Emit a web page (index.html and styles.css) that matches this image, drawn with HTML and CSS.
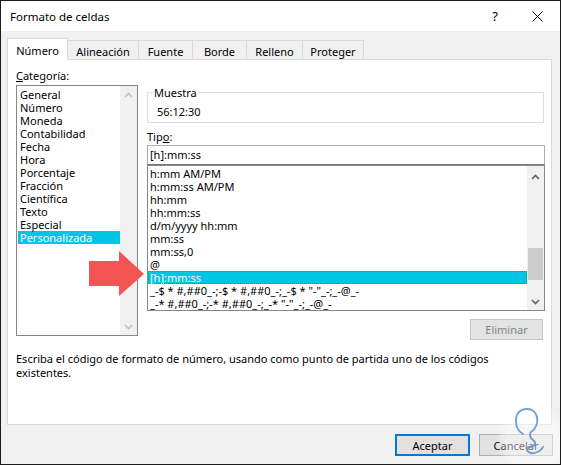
FILE: index.html
```html
<!DOCTYPE html>
<html lang="es">
<head>
<meta charset="utf-8">
<title>Formato de celdas</title>
<link rel="stylesheet" href="styles.css">
</head>
<body>
<div class="window">
  <div class="titlebar">
    <span class="title">Formato de celdas</span>
    <span class="tb-btn help">?</span>
    <span class="tb-btn close">
      <svg width="11" height="11" viewBox="0 0 11 11"><path d="M0.5 0.5 L10.5 10.5 M10.5 0.5 L0.5 10.5" stroke="#000" stroke-width="1" fill="none"/></svg>
    </span>
  </div>

  <div class="tabs">
    <div class="tab active t1">Número</div>
    <div class="tab t2">Alineación</div>
    <div class="tab t3">Fuente</div>
    <div class="tab t4">Borde</div>
    <div class="tab t5">Relleno</div>
    <div class="tab t6">Proteger</div>
  </div>

  <div class="panel">
    <div class="top">
      <div class="cat-col">
        <div class="label"><u>C</u>ategoría:</div>
        <div class="listbox cat">
          <div class="items">
            <div class="item">General</div>
            <div class="item">Número</div>
            <div class="item">Moneda</div>
            <div class="item">Contabilidad</div>
            <div class="item">Fecha</div>
            <div class="item">Hora</div>
            <div class="item">Porcentaje</div>
            <div class="item">Fracción</div>
            <div class="item">Científica</div>
            <div class="item">Texto</div>
            <div class="item">Especial</div>
            <div class="item selected">Personalizada</div>
          </div>
          <div class="vscroll disabled">
            <div class="sb-btn"><svg width="9" height="6" viewBox="0 0 9 6"><path d="M1 5 L4.5 1.5 L8 5" stroke="#c2c2c2" stroke-width="1.6" fill="none"/></svg></div>
            <div class="sb-track"></div>
            <div class="sb-btn"><svg width="9" height="6" viewBox="0 0 9 6"><path d="M1 1 L4.5 4.5 L8 1" stroke="#c2c2c2" stroke-width="1.6" fill="none"/></svg></div>
          </div>
        </div>
      </div>

      <div class="right-col">
        <div class="group">
          <span class="legend">Muestra</span>
          <div class="sample">56:12:30</div>
        </div>
        <div class="label tipo">Tip<u>o</u>:</div>
        <div class="input">[h]:mm:ss</div>
        <div class="listbox types">
          <div class="items">
            <div class="item">h:mm AM/PM</div>
            <div class="item">h:mm:ss AM/PM</div>
            <div class="item">hh:mm</div>
            <div class="item">hh:mm:ss</div>
            <div class="item">d/m/yyyy hh:mm</div>
            <div class="item">mm:ss</div>
            <div class="item">mm:ss,0</div>
            <div class="item">@</div>
            <div class="item selected focus">[h]:mm:ss</div>
            <div class="item">_-$ * #,##0_-;-$ * #,##0_-;_-$ * "-"_-;_-@_-</div>
            <div class="item">_-* #,##0_-;-* #,##0_-;_-* "-"_-;_-@_-</div>
          </div>
          <div class="vscroll">
            <div class="sb-btn up"><svg width="9" height="6" viewBox="0 0 9 6"><path d="M1 5 L4.5 1.5 L8 5" stroke="#606060" stroke-width="1.6" fill="none"/></svg></div>
            <div class="sb-track"><div class="sb-thumb"></div></div>
            <div class="sb-btn"><svg width="9" height="6" viewBox="0 0 9 6"><path d="M1 1 L4.5 4.5 L8 1" stroke="#606060" stroke-width="1.6" fill="none"/></svg></div>
          </div>
        </div>
        <div class="btn-row">
          <button class="btn disabled">Eliminar</button>
        </div>
      </div>
    </div>
    <p class="desc">Escriba el código de formato de número, usando como punto de partida uno de los códigos<br>existentes.</p>
  </div>

  <div class="footer">
    <button class="btn default">Aceptar</button>
    <button class="btn cancel">Cancelar</button>
  </div>

  <svg class="arrow" width="60" height="50" viewBox="0 0 60 50">
    <polygon points="1,12 31,12 31,2 56,25 31,47 31,37 1,37" fill="#f35454"/>
  </svg>

  <svg class="watermark" width="80" height="70" viewBox="0 0 80 70">
    <defs>
      <radialGradient id="wg" cx="0.5" cy="0.5" r="0.5">
        <stop offset="0.7" stop-color="#ffffff" stop-opacity="0.45"/>
        <stop offset="1" stop-color="#ffffff" stop-opacity="0"/>
      </radialGradient>
    </defs>
    <circle cx="40" cy="40" r="38" fill="url(#wg)"/>
    <path d="M30 33 C20 27 20 9 33 8 C46 7 48 24 38 31 C36 33 37 37 40 39 C44 42 42 45 37 46 C33 47 33 51 38 52 C43 53 49 49 50 46" stroke="#5a8fcf" stroke-opacity="0.85" stroke-width="2" fill="none" stroke-linecap="round"/>
  </svg>
</div>
</body>
</html>
```

FILE: styles.css
```css
html, body {
  margin: 0;
  padding: 0;
}

body {
  font-family: "Noto Sans", "Open Sans", sans-serif;
  font-size: 11px;
  color: #000;
  background: #fff;
}

.window {
  position: relative;
  width: 561px;
  height: 465px;
  box-sizing: border-box;
  border: 1px solid #1b1b1b;
  background: #f0f0f0;
  display: flex;
  flex-direction: column;
  overflow: hidden;
}

/* Title bar */
.titlebar {
  flex: none;
  height: 30px;
  background: #fff;
  display: flex;
  align-items: center;
}

.title {
  flex: 1;
  margin-left: 9px;
  font-size: 11.5px;
}

.tb-btn {
  width: 46px;
  height: 30px;
  display: flex;
  align-items: center;
  justify-content: center;
}

.help {
  font-size: 13px;
  margin-right: -4px;
}

/* Tabs */
.tabs {
  flex: none;
  height: 21px;
  margin-top: 7px;
  padding-left: 6px;
  display: flex;
  align-items: flex-end;
}

.tab {
  height: 19px;
  box-sizing: border-box;
  border: 1px solid #d9d9d9;
  border-bottom: none;
  background: #f0f0f0;
  display: flex;
  align-items: center;
  justify-content: center;
  padding-top: 2px;
  margin-left: -1px;
}

.tab.active {
  height: 22px;
  margin-left: 0;
  margin-bottom: -1px;
  background: #fff;
  position: relative;
  z-index: 1;
  padding-top: 1px;
}

.t1 { width: 61px; }
.t2 { width: 72px; }
.t3 { width: 55px; }
.t4 { width: 55px; }
.t5 { width: 57px; }
.t6 { width: 62px; }

/* Panel */
.panel {
  flex: none;
  margin-left: 6px;
  width: 545px;
  height: 366px;
  box-sizing: border-box;
  border: 1px solid #d9d9d9;
  background: #fff;
  display: flex;
  flex-direction: column;
}

.top {
  display: flex;
  gap: 9px;
  padding: 9px 0 0 8px;
}

.label {
  height: 13px;
  line-height: 13px;
}

.cat-col .label {
  margin-bottom: 3px;
}

.listbox {
  box-sizing: border-box;
  border: 1px solid #828790;
  background: #fff;
  display: flex;
}

.cat {
  width: 122px;
  height: 251px;
}

.cat .items {
  flex: 1;
  padding: 2px 0 0 1px;
}

.items {
  overflow: hidden;
}

.item {
  height: 13px;
  line-height: 13px;
  padding-left: 2px;
  white-space: nowrap;
}

.item.selected {
  background: #00c6e6;
  color: #fff;
}

.item.focus {
  box-sizing: border-box;
  outline: 1px dotted #c0504d;
  outline-offset: -1px;
  padding-left: 2px;
}

/* Scrollbars */
.vscroll {
  width: 17px;
  flex: none;
  background: #f0f0f0;
  display: flex;
  flex-direction: column;
}

.sb-btn {
  height: 17px;
  flex: none;
  display: flex;
  align-items: center;
  justify-content: center;
}

.sb-track {
  flex: 1;
  display: flex;
  flex-direction: column;
  align-items: center;
}

.types .sb-btn.up {
  height: 20px;
  padding-top: 1px;
  box-sizing: border-box;
}

.sb-thumb {
  width: 15px;
  height: 32px;
  margin-top: 62px;
  background: #cdcdcd;
}

/* Right column */
.right-col {
  width: 398px;
  display: flex;
  flex-direction: column;
}

.group {
  margin-top: 23px;
  width: 397px;
  height: 31px;
  box-sizing: border-box;
  border: 1px solid #dcdcdc;
  display: flex;
  flex-direction: column;
  align-items: flex-start;
}

.legend {
  margin: -7px 0 0 5px;
  padding: 0 1px;
  line-height: 13px;
  background: #fff;
}

.sample {
  margin: 6px 0 0 9px;
  line-height: 13px;
}

.label.tipo {
  margin-top: 7px;
  margin-bottom: 2px;
}

.input {
  height: 20px;
  box-sizing: border-box;
  border: 1px solid #abadb3;
  border-bottom-color: #7a7a7a;
  padding-left: 2px;
  line-height: 18px;
}

.types {
  height: 146px;
}

.types .items {
  flex: 1;
  padding-top: 1px;
}

.btn-row {
  display: flex;
  justify-content: flex-end;
  margin-top: 8px;
  padding-right: 2px;
}

/* Buttons */
.btn {
  font-family: inherit;
  font-size: 11px;
  height: 22px;
  box-sizing: border-box;
  background: #e1e1e1;
  border: 1px solid #adadad;
  color: #000;
  padding: 0;
  margin: 0;
}

.btn.disabled {
  width: 73px;
  height: 21px;
  background: #e3e3e3;
  border-color: #c6c6c6;
  color: #838383;
}

.desc {
  margin: 12px 0 0 8px;
  line-height: 14px;
  white-space: nowrap;
}

.footer {
  flex: none;
  display: flex;
  justify-content: flex-end;
  gap: 9px;
  padding: 9px 7px 0 0;
}

.btn.default {
  width: 75px;
  border: 2px solid #0078d7;
}

.btn.cancel {
  width: 74px;
}

/* Overlays */
.arrow {
  position: absolute;
  left: 87px;
  top: 248px;
}

.watermark {
  position: absolute;
  left: 492px;
  top: 400px;
  pointer-events: none;
}
```
